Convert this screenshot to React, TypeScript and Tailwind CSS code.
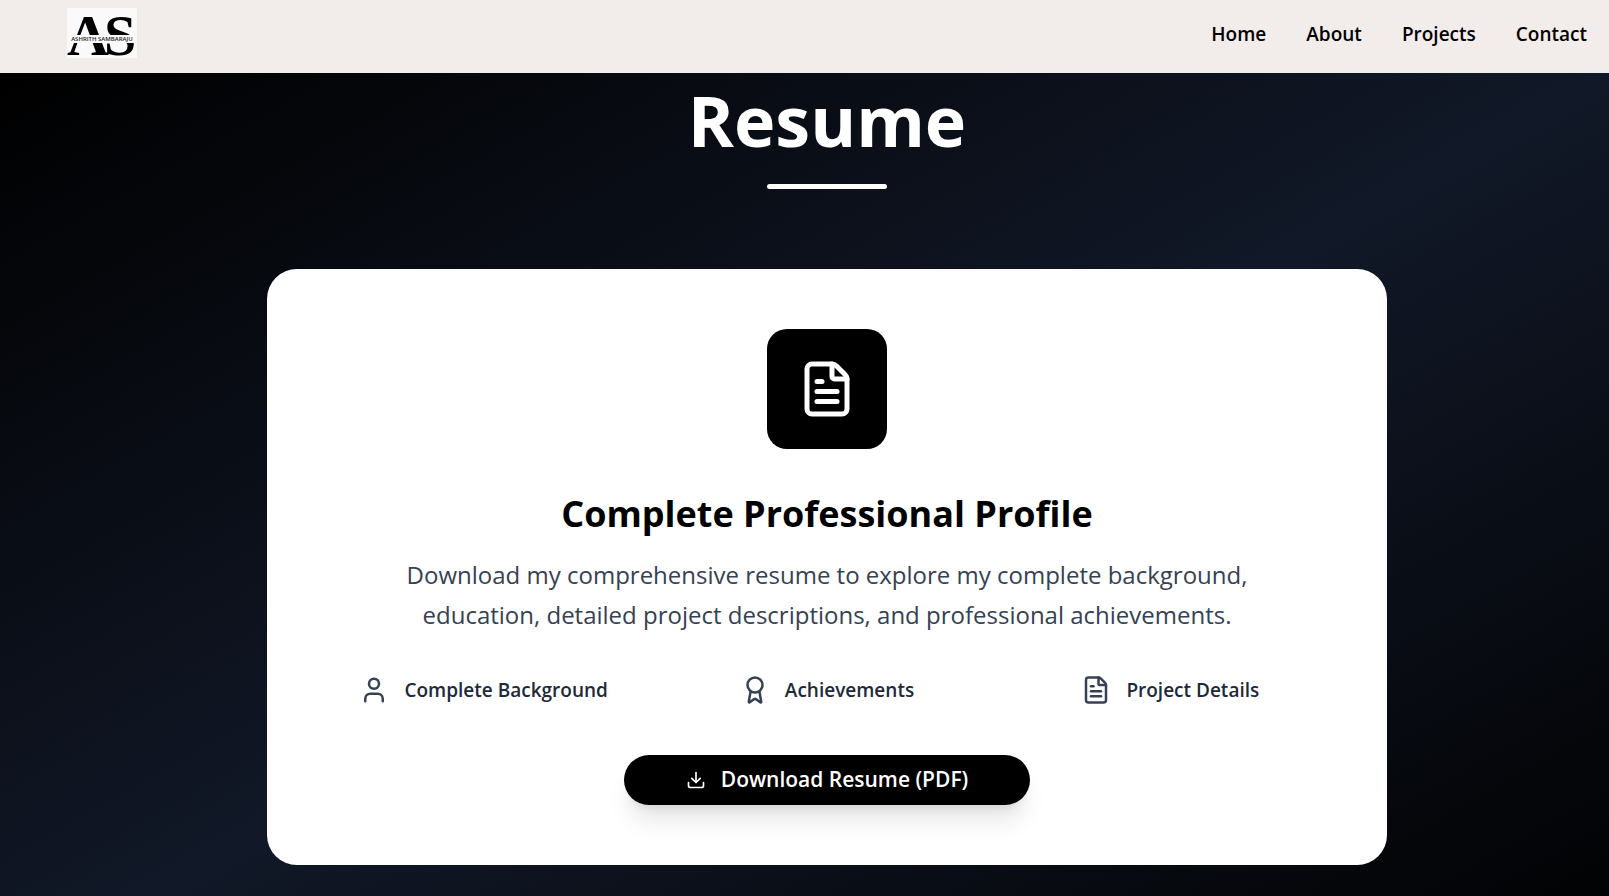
import { Award, Download, FileText, User } from "lucide-react";

const links = ["Home", "About", "Projects", "Contact"];

const features = [
  { label: "Complete Background", Icon: User },
  { label: "Achievements", Icon: Award },
  { label: "Project Details", Icon: FileText },
];

function Logo() {
  return (
    <svg viewBox="0 0 70 50" className="block h-[50px] w-[70px] overflow-visible" role="img" aria-label="Ashrith Sambaraju">
      <rect width="70" height="50" fill="#fafafa" />
      <g fontFamily="'Liberation Serif', serif" fontWeight="700" fontSize="58" fill="#000">
        <text x="0" y="47">A</text>
        <text x="37" y="47">S</text>
      </g>
      <rect y="27" width="70" height="8" fill="#fafafa" />
      <text x="35" y="33" textAnchor="middle" fontFamily="'Open Sans', sans-serif" fontWeight="600" fontSize="6" fill="#222">
        ASHRITH SAMBARAJU
      </text>
    </svg>
  );
}

export default function App() {
  return (
    <div className="flex min-h-screen flex-col bg-black font-['Open_Sans','Noto_Sans',sans-serif]">
      <header className="flex h-[73px] items-start justify-between bg-[#f2ecea] pt-2 pr-[22px] pl-[67px]">
        <a href="#home">
          <Logo />
        </a>
        <nav className="flex gap-10 pt-3">
          {links.map((link) => (
            <a key={link} href={`#${link.toLowerCase()}`} className="text-[19px] leading-7 font-semibold text-black">
              {link}
            </a>
          ))}
        </nav>
      </header>

      <main className="flex flex-1 flex-col items-center bg-[linear-gradient(to_bottom_right,#000000,#111827,#000000)] bg-[length:100%_110%] bg-no-repeat pb-8 pl-[45px]">
        <h1 className="pt-2 text-[70px] leading-[78px] font-bold text-white">Resume</h1>
        <div className="mt-[25px] h-[5px] w-[120px] rounded-full bg-white" />

        <section className="mt-20 flex w-full max-w-[1120px] flex-col items-center rounded-[30px] bg-white p-[60px] text-center">
          <div className="flex size-[120px] items-center justify-center rounded-[20px] bg-black text-white">
            <FileText size={60} />
          </div>
          <h2 className="mt-10 text-[36px] leading-[50px] font-bold text-black">Complete Professional Profile</h2>
          <p className="mt-4 max-w-[860px] text-[24px] leading-10 text-gray-700">
            Download my comprehensive resume to explore my complete background, education, detailed project descriptions, and professional achievements.
          </p>
          <ul className="mt-10 grid w-full grid-cols-3 gap-[30px]">
            {features.map(({ label, Icon }) => (
              <li key={label} className="flex items-center justify-center gap-[15px] text-gray-700">
                <Icon size={30} />
                <span className="text-[19px] leading-[30px] font-semibold text-gray-800">{label}</span>
              </li>
            ))}
          </ul>
          <a
            href="#resume"
            className="mt-[50px] flex h-[50px] items-center gap-[15px] rounded-full bg-black px-[62px] text-[21px] font-semibold text-white shadow-xl"
          >
            <Download size={20} />
            Download Resume (PDF)
          </a>
        </section>
      </main>
    </div>
  );
}
